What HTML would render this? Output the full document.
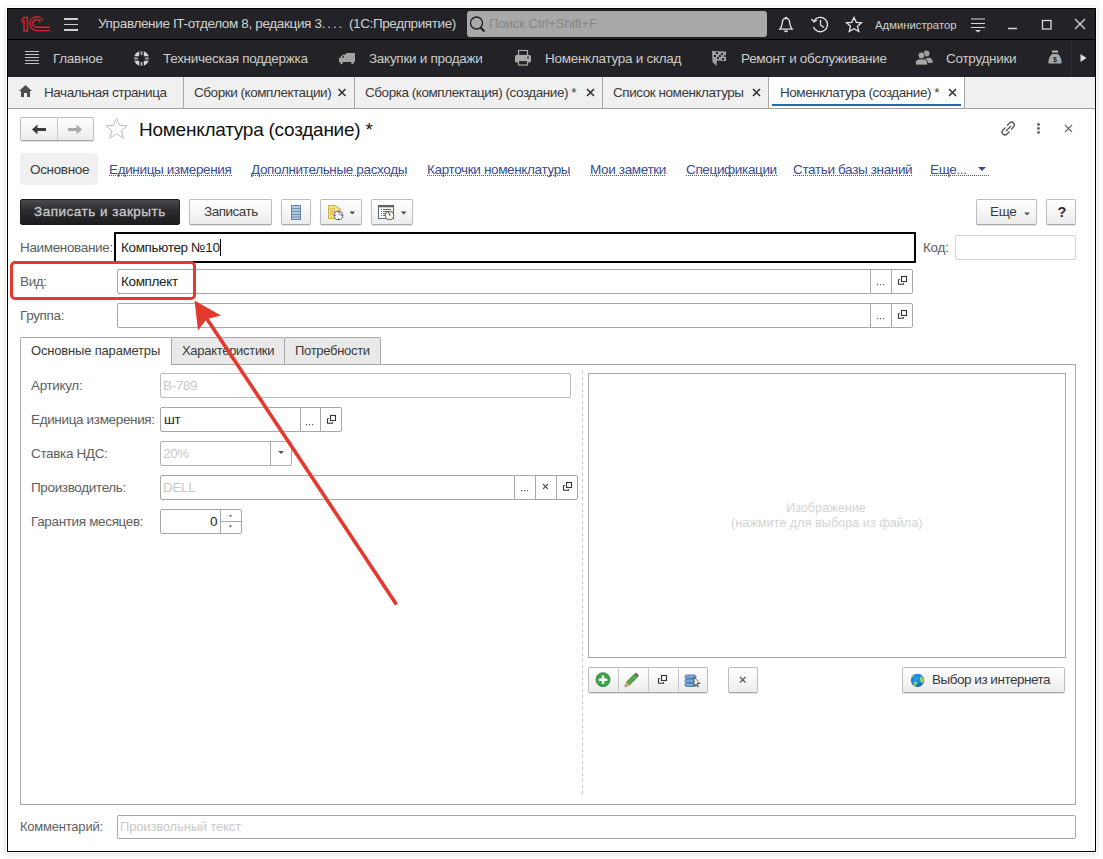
<!DOCTYPE html>
<html><head><meta charset="utf-8">
<style>
*{box-sizing:border-box;margin:0;padding:0}
html,body{width:1103px;height:859px;overflow:hidden;background:#fff;font-family:"Liberation Sans",sans-serif}
.a{position:absolute}
.t{position:absolute;white-space:nowrap;line-height:16px}
#win{position:absolute;left:7px;top:8px;width:1089px;height:844px;border:1px solid #000;background:#fff;box-shadow:0 0 0 1px #fff,0 1px 5px 2px rgba(0,0,0,.10)}
.dk{background:#232327}
.tb{font-size:13.5px;letter-spacing:-0.35px;color:#d2d2d2}
.sb{font-size:13.5px;letter-spacing:-0.28px;color:#cbcbcb}
.tab{font-size:13.5px;letter-spacing:-0.45px;color:#3a3a3a}
.lbl{font-size:13.5px;letter-spacing:-0.35px;color:#606060}
.val{font-size:13.5px;letter-spacing:-0.35px;color:#3a3a3a}
.ph{font-size:13.5px;letter-spacing:-0.35px;color:#c8c8c8}
.lnk{font-size:13.5px;letter-spacing:-0.35px;color:#3b4b8f;background:linear-gradient(to right,#4a5590 50%,transparent 50%) 0 13px/2px 1px repeat-x}
.btn{position:absolute;border:1px solid #bdbdbd;border-bottom-color:#a6a6a6;border-radius:2px;background:linear-gradient(#ffffff,#ececec);box-shadow:0 1px 1px rgba(0,0,0,.12)}
.inp{position:absolute;border:1px solid #a8a8a8;border-radius:2px;background:#fff}
.sep{position:absolute;top:0;bottom:0;width:1px;background:#a8a8a8}
svg{position:absolute;overflow:visible}
</style></head><body>
<div id="win"></div>

<!-- title bar -->
<div class="a dk" style="left:8px;top:9px;width:1087px;height:30px"></div>
<div class="a" style="left:8px;top:39px;width:1087px;height:1px;background:#000"></div>
<!-- section bar -->
<div class="a dk" style="left:8px;top:40px;width:1087px;height:37px"></div>

<!-- 1C logo -->
<svg style="left:0;top:0" width="60" height="40" viewBox="0 0 60 40">
 <g fill="none" stroke="#e0202e" stroke-width="1.4">
  <path d="M21.5 20.5 L24 17.5 L27.5 17.5 L27.5 31 L24 31 L24 21 L22 22.5"/>
  <path d="M43 20.5 A6.9 6.9 0 1 0 37 30.6 L50 30.6"/>
  <path d="M40.3 22.3 A3.8 3.8 0 1 0 37 27.2 L50 27.2"/>
 </g>
</svg>
<!-- hamburger -->
<div class="a" style="left:64px;top:18px;width:14px;height:1.5px;background:#d0d0d0"></div>
<div class="a" style="left:64px;top:23.5px;width:14px;height:1.5px;background:#d0d0d0"></div>
<div class="a" style="left:64px;top:29px;width:14px;height:1.5px;background:#d0d0d0"></div>
<div class="t tb" style="left:98px;top:15.5px">Управление IT-отделом 8, редакция 3<span style="letter-spacing:1.9px">....</span></div>
<div class="t tb" style="left:349px;top:15.5px;letter-spacing:-0.39px">(1С:Предприятие)</div>
<!-- search -->
<div class="a" style="left:467px;top:11px;width:300px;height:26px;background:#a9a9a9;border-radius:3px"></div>
<svg style="left:0;top:0" width="500" height="40">
 <circle cx="476.5" cy="23" r="6" fill="none" stroke="#1e1e1e" stroke-width="1.3"/>
 <path d="M480.5 27.5 L484.5 31.5" stroke="#1e1e1e" stroke-width="2.2"/>
</svg>
<div class="t" style="left:489px;top:16px;font-size:13.3px;letter-spacing:-0.2px;color:#868686">Поиск Ctrl+Shift+F</div>
<!-- bell history star -->
<svg style="left:0;top:0" width="1103" height="40">
 <g fill="none" stroke="#e6e6e6" stroke-width="1.3">
  <path d="M786 18.2 Q782.3 18.6 782.2 23.5 Q781.8 26.8 779.8 29.2 L792.2 29.2 Q790.2 26.8 789.8 23.5 Q789.7 18.6 786 18.2 Z"/>
  <path d="M784.3 31.3 L787.7 31.3" stroke-width="1.6"/>
  <circle cx="786" cy="18" r="0.6"/>
  <path d="M814 21 A7.2 7.2 0 1 1 813.5 27"/>
  <path d="M811.5 19 L814 22 L817 20"/>
  <path d="M820.5 20 L820.5 25 L824 27.5"/>
  <path d="M854 17.5 L856.3 22.3 L861.5 22.8 L857.5 26.3 L858.8 31.5 L854 28.7 L849.2 31.5 L850.5 26.3 L846.5 22.8 L851.7 22.3 Z"/>
 </g>
 <g stroke="#d8d8d8" stroke-width="1.5" fill="none">
  <path d="M971 19 L985 19 M971 23.5 L985 23.5 M971 27.5 L985 27.5" stroke-width="1.1"/>
  <path d="M1008 28.5 L1017 28.5"/>
  <rect x="1042.5" y="20.5" width="8.5" height="8.5" stroke-width="1.3"/>
  <path d="M1075 19 L1085 29 M1085 19 L1075 29" stroke-width="1.3"/>
 </g>
 <path d="M975 30 L981 30 L978 32.5 Z" fill="#d0d0d0"/>
</svg>
<div class="t" style="left:875px;top:16.5px;font-size:11.3px;color:#d0d0d0">Администратор</div>

<!-- section bar content -->
<svg style="left:0;top:0" width="1103" height="80">
 <g stroke="#c4c4c4" stroke-width="1.1">
  <path d="M25 51.5 L39 51.5 M25 54.5 L39 54.5 M25 57.5 L39 57.5 M25 60.5 L39 60.5 M25 63.5 L39 63.5"/>
 </g>
 <!-- lifebuoy -->
 <circle cx="141.5" cy="58.5" r="7.6" fill="#d6d6d6"/>
 <path d="M141.5 50.5 L141.5 66.5 M133.5 58.5 L149.5 58.5" stroke="#232327" stroke-width="4.6"/>
 <path d="M141.5 51.2 L141.5 55 M141.5 62 L141.5 65.8 M134.2 58.5 L138 58.5 M145 58.5 L148.8 58.5" stroke="#a4a4a4" stroke-width="2"/>
 <circle cx="141.5" cy="58.5" r="3" fill="#232327"/>
 <!-- truck -->
 <path d="M346 53 L355 53 L355 62 L339 62 L339 58.5 L343 54.5 L346 54.5 Z" fill="#a3a3a3"/>
 <path d="M341.5 57.5 L344 55.5 L344 57.5 Z" fill="#232327"/>
 <circle cx="341.5" cy="63" r="1.3" fill="#a3a3a3"/><circle cx="352.5" cy="63" r="1.3" fill="#a3a3a3"/>
 <!-- printer -->
 <rect x="518.5" y="50.5" width="9" height="5" fill="none" stroke="#a8a8a8" stroke-width="1.2"/>
 <rect x="515" y="55" width="16" height="7.5" rx="1.5" fill="#a8a8a8"/>
 <rect x="518.5" y="60.5" width="9" height="4.5" fill="#232327" stroke="#a8a8a8" stroke-width="1.2"/>
 <circle cx="528" cy="57.5" r="0.9" fill="#232327"/>
 <!-- flag -->
 <path d="M712 51 L726 51.5 L726 61 L717 60.5 L716.5 66 L712.5 62 Z" fill="#9f9f9f"/>
 <g fill="#232327"><rect x="716" y="52" width="2" height="2"/><rect x="721" y="53" width="2" height="2"/><rect x="714" y="55" width="2" height="2"/><rect x="719" y="55" width="2" height="2"/><rect x="724" y="55" width="1.5" height="2"/><rect x="717" y="57" width="2" height="2"/><rect x="722" y="58" width="2" height="2"/></g>
 <!-- people -->
 <circle cx="926.5" cy="53.5" r="3" fill="#a0a0a0"/>
 <path d="M924 59 L929.5 57.5 L932.5 60 L932.5 63 L927 63 Z" fill="#a0a0a0"/>
 <circle cx="921.5" cy="55.5" r="3.4" fill="#a8a8a8" stroke="#232327" stroke-width="0.8"/>
 <path d="M915.5 65 L915.5 62 Q916 59.5 919 59 L924 59 Q927 59.5 927.5 62 L927.5 65 Z" fill="#a8a8a8" stroke="#232327" stroke-width="0.8"/>
 <!-- money bag -->
 <rect x="1052" y="50.5" width="6" height="2.2" fill="#b0b0b0"/>
 <path d="M1052 54 L1058 54 Q1062 57.5 1061.5 63.5 L1048.5 63.5 Q1048 57.5 1052 54 Z" fill="#a8a8a8"/>
 <text x="1055" y="62" font-size="7" font-family="Liberation Sans" fill="#232327" text-anchor="middle" font-weight="bold">$</text>
 <!-- separator and arrow -->
 <rect x="1071" y="40" width="1" height="37" fill="#2e2e33"/>
 <path d="M1080.5 54 L1086.5 58 L1080.5 62 Z" fill="#e0e0e0"/>
</svg>
<div class="t sb" style="left:53px;top:50.5px">Главное</div>
<div class="t sb" style="left:163px;top:50.5px">Техническая поддержка</div>
<div class="t sb" style="left:369px;top:50.5px">Закупки и продажи</div>
<div class="t sb" style="left:545px;top:50.5px">Номенклатура и склад</div>
<div class="t sb" style="left:741px;top:50.5px">Ремонт и обслуживание</div>
<div class="t sb" style="left:946px;top:50.5px">Сотрудники</div>

<!-- tab bar -->
<div class="a" style="left:8px;top:77px;width:1087px;height:32px;background:#f0f0f0;border-bottom:1px solid #a0a0a0"></div>
<div class="a" style="left:769px;top:77px;width:195px;height:31px;background:#fff"></div>
<div class="a" style="left:772px;top:104px;width:189px;height:2px;background:#1f6db0"></div>
<div class="a" style="left:183px;top:77px;width:1px;height:31px;background:#a8a8a8"></div>
<div class="a" style="left:354px;top:77px;width:1px;height:31px;background:#a8a8a8"></div>
<div class="a" style="left:602px;top:77px;width:1px;height:31px;background:#a8a8a8"></div>
<div class="a" style="left:768px;top:77px;width:1px;height:31px;background:#a8a8a8"></div>
<div class="a" style="left:964px;top:77px;width:1px;height:31px;background:#a8a8a8"></div>
<svg style="left:0;top:0" width="1103" height="110">
 <path d="M25.5 85 L19 91 L21 91 L21 97 L24 97 L24 93 L27 93 L27 97 L30 97 L30 91 L32 91 Z" fill="#4d4d4d"/>
 <g stroke="#333" stroke-width="1.6">
  <path d="M338.5 89 L345.5 96 M345.5 89 L338.5 96"/>
  <path d="M587 89 L594 96 M594 89 L587 96"/>
  <path d="M753 89 L760 96 M760 89 L753 96"/>
  <path d="M949 89 L956 96 M956 89 L949 96"/>
 </g>
</svg>
<div class="t tab" style="left:44px;top:84.5px">Начальная страница</div>
<div class="t tab" style="left:194px;top:84.5px">Сборки (комплектации)</div>
<div class="t tab" style="left:365px;top:84.5px">Сборка (комплектация) (создание) *</div>
<div class="t tab" style="left:613px;top:84.5px">Список номенклатуры</div>
<div class="t tab" style="left:780px;top:84.5px">Номенклатура (создание) *</div>

<!-- header -->
<div class="btn" style="left:20px;top:117px;width:74px;height:24px"></div>
<div class="a" style="left:57px;top:118px;width:1px;height:22px;background:#c8c8c8"></div>
<svg style="left:0;top:0" width="1103" height="150">
 <path d="M32 129.5 L37.5 124.5 L37.5 128 L46 128 L46 131 L37.5 131 L37.5 134.5 Z" fill="#3c3c3c"/>
 <path d="M82 129.5 L76.5 124.5 L76.5 128 L68 128 L68 131 L76.5 131 L76.5 134.5 Z" fill="#a9a9a9"/>
 <path d="M116.5 118.5 L119.4 125.3 L127 125.8 L121.2 130.6 L123.2 138.2 L116.5 134 L109.8 138.2 L111.8 130.6 L106 125.8 L113.6 125.3 Z" fill="none" stroke="#bdbdbd" stroke-width="1"/>
 <g fill="none" stroke="#555" stroke-width="1.3">
  <path d="M1007 125.5 L1009.5 123 A2.8 2.8 0 0 1 1013.5 127 L1011 129.5"/>
  <path d="M1009.5 131.5 L1007 134 A2.8 2.8 0 0 1 1003 130 L1005.5 127.5"/>
  <path d="M1006 131 L1011 126"/>
  <path d="M1065 125 L1072 132 M1072 125 L1065 132" stroke="#666" stroke-width="1.1"/>
 </g>
 <circle cx="1038.5" cy="124.5" r="1.4" fill="#666"/>
 <circle cx="1038.5" cy="128.5" r="1.4" fill="#666"/>
 <circle cx="1038.5" cy="132.5" r="1.4" fill="#666"/>
</svg>
<div class="t" style="left:139px;top:120px;font-size:19px;letter-spacing:-0.25px;line-height:20px;color:#111">Номенклатура (создание) *</div>

<!-- links bar -->
<div class="a" style="left:20px;top:153px;width:78px;height:32px;background:#f0f0f0;border-radius:3px"></div>
<div class="t val" style="left:30px;top:162px">Основное</div>
<div class="t lnk" style="left:109px;top:162px">Единицы измерения</div>
<div class="t lnk" style="left:251px;top:162px">Дополнительные расходы</div>
<div class="t lnk" style="left:427px;top:162px">Карточки номенклатуры</div>
<div class="t lnk" style="left:590px;top:162px">Мои заметки</div>
<div class="t lnk" style="left:686px;top:162px">Спецификации</div>
<div class="t lnk" style="left:793px;top:162px">Статьи базы знаний</div>
<div class="t lnk" style="left:930px;top:162px;width:59px">Еще...</div>
<svg style="left:0;top:0" width="1103" height="200"><path d="M978 167 L986 167 L982 171 Z" fill="#3b4b8f"/></svg>

<!-- command bar -->
<div class="a" style="left:20px;top:199px;width:160px;height:26px;border-radius:2px;background:linear-gradient(#4a4a4e,#2c2c2f 45%,#1d1d20);border:1px solid #1a1a1a"></div>
<div class="t" style="left:34px;top:204px;font-size:13.5px;color:#c6c6c6;letter-spacing:0.5px;-webkit-text-stroke:0.35px #c6c6c6">Записать и закрыть</div>
<div class="btn" style="left:189px;top:199px;width:83px;height:26px"></div>
<div class="t val" style="left:204px;top:204px;letter-spacing:-0.5px">Записать</div>
<div class="btn" style="left:281px;top:199px;width:30px;height:26px"></div>
<div class="btn" style="left:320px;top:199px;width:42px;height:26px"></div>
<div class="btn" style="left:371px;top:199px;width:42px;height:26px"></div>
<div class="btn" style="left:976px;top:199px;width:61px;height:26px"></div>
<div class="t val" style="left:990px;top:204px">Еще</div>
<div class="btn" style="left:1046px;top:199px;width:30px;height:26px"></div>
<div class="t" style="left:1057.5px;top:204px;font-size:14.5px;font-weight:bold;color:#2a2a2a">?</div>
<svg style="left:0;top:0" width="1103" height="240">
 <!-- list icon -->
 <rect x="291.5" y="205.5" width="9" height="14" fill="#b4cade" stroke="#6486a6"/>
 <path d="M292 208.5 H300 M292 211.5 H300 M292 214.5 H300 M292 217 H300" stroke="#5a7fa8" stroke-width="0.8"/>
 <!-- doc gear -->
 <path d="M328.5 205.5 H335 L340.5 209.5 V218.5 H328.5 Z" fill="#f3df86" stroke="#c9ad4a"/>
 <path d="M330 209 H335 M330 211.5 H336 M330 214 H334" stroke="#caa440" stroke-width="0.8"/>
 <circle cx="338.5" cy="215.5" r="4.3" fill="#fff" stroke="#70708f" stroke-width="1.1"/>
 <path d="M338.5 215.5 V211.5 A4 4 0 0 1 342.5 215.5 Z" fill="#b9b9d6"/>
 <g fill="#2a2a4a"><rect x="338" y="211.3" width="1.1" height="1.1"/><rect x="338" y="218.8" width="1.1" height="1.1"/><rect x="334.4" y="215" width="1.1" height="1.1"/><rect x="341.6" y="215" width="1.1" height="1.1"/></g>
 <path d="M349.5 211.5 H355 L352.25 214.5 Z" fill="#444"/>
 <!-- calendar-clock -->
 <rect x="378.5" y="205.5" width="15" height="13" fill="#fff" stroke="#5d6670"/>
 <rect x="378.5" y="205.5" width="15" height="1.8" fill="#5d6670"/>
 <g fill="#4f6fae"><rect x="381" y="209" width="1" height="1"/><rect x="381" y="211" width="1" height="1"/><rect x="381" y="213" width="1" height="1"/><rect x="381" y="215" width="1" height="1"/>
 <rect x="383" y="209" width="8" height="1"/><rect x="383" y="211" width="5" height="1"/><rect x="383" y="213" width="4" height="1"/><rect x="383" y="215" width="3" height="1"/></g>
 <circle cx="389.5" cy="215.5" r="4.2" fill="#fff" stroke="#5f8466" stroke-width="1.2"/>
 <path d="M388.3 212.3 L390.3 215.6" stroke="#3f5a45" stroke-width="1.1"/>
 <path d="M401 211.5 H406.5 L403.75 214.5 Z" fill="#444"/>
 <path d="M1024 212.5 H1030 L1027 215.5 Z" fill="#555"/>
</svg>

<!-- Наименование row -->
<div class="t lbl" style="left:20px;top:240px">Наименование:</div>
<div class="a" style="left:114px;top:232px;width:802px;height:31px;border:2px solid #000;background:#fff"></div>
<div class="t val" style="left:121px;top:240px;color:#222">Компьютер №10</div>
<div class="a" style="left:220px;top:239px;width:1px;height:17px;background:#000"></div>
<div class="t lbl" style="left:923px;top:240px">Код:</div>
<div class="inp" style="left:955px;top:235px;width:121px;height:25px;border-color:#d6d6d6"></div>

<!-- Вид / Группа -->
<div class="t lbl" style="left:20px;top:274px">Вид:</div>
<div class="inp" style="left:117px;top:269px;width:796px;height:25px"><div class="sep" style="left:752px"></div><div class="sep" style="left:773px"></div></div>
<div class="t val" style="left:121px;top:274px;color:#222">Комплект</div>
<div class="t lbl" style="left:20px;top:308px">Группа:</div>
<div class="inp" style="left:117px;top:303px;width:796px;height:25px"><div class="sep" style="left:752px"></div><div class="sep" style="left:773px"></div></div>
<svg style="left:0;top:0" width="1103" height="340">
 <g fill="#666"><rect x="877" y="284" width="1.2" height="1.2"/><rect x="880" y="284" width="1.2" height="1.2"/><rect x="883" y="284" width="1.2" height="1.2"/>
 <rect x="877" y="318" width="1.2" height="1.2"/><rect x="880" y="318" width="1.2" height="1.2"/><rect x="883" y="318" width="1.2" height="1.2"/></g>
 <g fill="none" stroke="#333" stroke-width="1.1">
  <g transform="translate(898,276)" fill="none" stroke="#333" stroke-width="1.1"><path d="M0.5 3.5 V8.3 H5.4 V7 M0.5 3.5 H1.8"/><rect x="3.5" y="0.5" width="5" height="5"/></g><g transform="translate(898,310)" fill="none" stroke="#333" stroke-width="1.1"><path d="M0.5 3.5 V8.3 H5.4 V7 M0.5 3.5 H1.8"/><rect x="3.5" y="0.5" width="5" height="5"/></g>
 </g>
</svg>

<!-- tabs -->
<div class="a" style="left:20px;top:364px;width:1056px;height:441px;border:1px solid #a8a8a8;background:#fff"></div>
<div class="a" style="left:20px;top:337px;width:152px;height:28px;border:1px solid #a8a8a8;border-bottom:none;border-radius:2px 2px 0 0;background:#fff"></div>
<div class="a" style="left:171px;top:337px;width:114px;height:28px;border:1px solid #a8a8a8;border-radius:2px 2px 0 0;background:#e9e9e9"></div>
<div class="a" style="left:284px;top:337px;width:97px;height:28px;border:1px solid #a8a8a8;border-radius:2px 2px 0 0;background:#e9e9e9"></div>
<div class="a" style="left:21px;top:364px;width:150px;height:1px;background:#fff"></div>
<div class="t val" style="left:31px;top:342.5px;font-size:13px;letter-spacing:-0.18px">Основные параметры</div>
<div class="t val" style="left:182px;top:342.5px;font-size:13px;letter-spacing:-0.3px">Характеристики</div>
<div class="t val" style="left:295px;top:342.5px;font-size:13px;letter-spacing:-0.3px">Потребности</div>

<!-- left fields -->
<div class="t lbl" style="left:31px;top:378px">Артикул:</div>
<div class="inp" style="left:160px;top:373px;width:411px;height:25px;border-color:#bcbcbc"></div>
<div class="t ph" style="left:163px;top:378px">B-789</div>

<div class="t lbl" style="left:31px;top:412px">Единица измерения:</div>
<div class="inp" style="left:160px;top:407px;width:182px;height:25px"><div class="sep" style="left:139px"></div><div class="sep" style="left:159px"></div></div>
<div class="t val" style="left:164px;top:412px;color:#222">шт</div>

<div class="t lbl" style="left:31px;top:446px">Ставка НДС:</div>
<div class="inp" style="left:160px;top:441px;width:132px;height:25px;border-color:#b0b0b0"><div class="sep" style="left:109px"></div></div>
<div class="t ph" style="left:163px;top:446px">20%</div>

<div class="t lbl" style="left:31px;top:480px">Производитель:</div>
<div class="inp" style="left:160px;top:475px;width:418px;height:25px"><div class="sep" style="left:353px"></div><div class="sep" style="left:374px"></div><div class="sep" style="left:395px"></div></div>
<div class="t ph" style="left:163px;top:480px">DELL</div>

<div class="t lbl" style="left:31px;top:514px">Гарантия месяцев:</div>
<div class="inp" style="left:160px;top:509px;width:82px;height:25px"><div class="sep" style="left:59px"></div></div>
<div class="a" style="left:221px;top:521px;width:20px;height:1px;background:#a8a8a8"></div>
<div class="t val" style="left:210px;top:513.5px;color:#222">0</div>

<svg style="left:0;top:0" width="1103" height="859">
 <g fill="#555">
  <rect x="306" y="424" width="1.2" height="1.2"/><rect x="309" y="424" width="1.2" height="1.2"/><rect x="312" y="424" width="1.2" height="1.2"/>
  <rect x="521" y="490" width="1.2" height="1.2"/><rect x="524" y="490" width="1.2" height="1.2"/><rect x="527" y="490" width="1.2" height="1.2"/>
  <path d="M278 451 H284 L281 454 Z"/>
  <path d="M228.8 516.6 H232.2 L230.5 514.6 Z"/>
  <path d="M228.8 525.4 H232.2 L230.5 527.4 Z"/>
 </g>
 <g fill="none" stroke="#333" stroke-width="1.1">
  <g transform="translate(327,415)" fill="none" stroke="#333" stroke-width="1.1"><path d="M0.5 3.5 V8.3 H5.4 V7 M0.5 3.5 H1.8"/><rect x="3.5" y="0.5" width="5" height="5"/></g>
  <g transform="translate(563,482)" fill="none" stroke="#333" stroke-width="1.1"><path d="M0.5 3.5 V8.3 H5.4 V7 M0.5 3.5 H1.8"/><rect x="3.5" y="0.5" width="5" height="5"/></g>
  <path d="M543 484 L548 489 M548 484 L543 489" stroke="#555"/>
 </g>
 <!-- dashed separator -->
 <path d="M582.5 371 V796" stroke="#c6c6c6" stroke-dasharray="3 3"/>
</svg>

<!-- image box -->
<div class="a" style="left:588px;top:373px;width:478px;height:285px;border:1px solid #a8a8a8"></div>
<div class="t" style="left:786px;top:500px;font-size:12.7px;color:#d4d4d4">Изображение</div>
<div class="t" style="left:731px;top:515px;font-size:12.7px;color:#d4d4d4">(нажмите для выбора из файла)</div>
<div class="btn" style="left:588px;top:667px;width:120px;height:26px"></div>
<div class="a" style="left:618px;top:668px;width:1px;height:24px;background:#c8c8c8"></div>
<div class="a" style="left:648px;top:668px;width:1px;height:24px;background:#c8c8c8"></div>
<div class="a" style="left:678px;top:668px;width:1px;height:24px;background:#c8c8c8"></div>
<div class="btn" style="left:728px;top:667px;width:30px;height:26px"></div>
<div class="btn" style="left:902px;top:667px;width:163px;height:26px"></div>
<div class="t val" style="left:932px;top:672px;letter-spacing:-0.48px">Выбор из интернета</div>
<svg style="left:0;top:0" width="1103" height="859">
 <circle cx="603" cy="679.7" r="7" fill="#3aa54a" stroke="#2b7f38" stroke-width="0.8"/>
 <path d="M603 675.5 V684 M598.8 679.7 H607.2" stroke="#fff" stroke-width="2.4"/>
 <path d="M625 687 L626.5 682 L634.5 674 L637.5 677 L629.5 685 Z" fill="#55a84a" stroke="#2f6f2a" stroke-width="0.7"/>
 <path d="M634.5 674 L636 672.5 L639 675.5 L637.5 677 Z" fill="#7a5a4a"/>
 <path d="M625 687 L626.5 682 L629.5 685 Z" fill="#e8b070"/>
 <g fill="none" stroke="#333" stroke-width="1.1">
  <g transform="translate(658,675)" fill="none" stroke="#333" stroke-width="1.1"><path d="M0.5 3.5 V8.3 H5.4 V7 M0.5 3.5 H1.8"/><rect x="3.5" y="0.5" width="5" height="5"/></g>
  <path d="M740 677 L745.5 682.5 M745.5 677 L740 682.5" stroke="#555"/>
 </g>
 <g>
  <rect x="685" y="675" width="11" height="3.5" rx="1.5" fill="#7aa6d8" stroke="#3e6ea6" stroke-width="0.8"/>
  <rect x="685" y="679" width="11" height="3.5" rx="1.5" fill="#7aa6d8" stroke="#3e6ea6" stroke-width="0.8"/>
  <rect x="685" y="683" width="11" height="3.5" rx="1.5" fill="#7aa6d8" stroke="#3e6ea6" stroke-width="0.8"/>
  <path d="M694 677 L694 686 L696 684 L697.5 687 L698.5 686.5 L697 683.5 L700 683.5 Z" fill="#fff" stroke="#333" stroke-width="0.8"/>
 </g>
 <!-- globe -->
 <defs><radialGradient id="gl" cx="0.45" cy="0.35" r="0.7"><stop offset="0" stop-color="#1aa8f0"/><stop offset="0.6" stop-color="#1c78dc"/><stop offset="1" stop-color="#1f4fa0"/></radialGradient></defs>
 <circle cx="917.5" cy="680.3" r="6.6" fill="url(#gl)"/>
 <path d="M920.5 676.5 Q923.5 677 923.8 680.5 Q923.5 683 921.5 683.2 Q920 681 919.8 678.5 Z" fill="#8fdc5c"/>
 <path d="M913.5 681.5 Q915.5 681 917.5 682.5 L916.5 685 Q915.5 686.5 914.5 686 Q913 684 913.5 681.5 Z" fill="#84d45a"/>
 <circle cx="912.5" cy="676.3" r="1" fill="#9ad860"/>
</svg>

<!-- comment -->
<div class="t lbl" style="left:20px;top:819px;font-size:13px;letter-spacing:-0.22px">Комментарий:</div>
<div class="inp" style="left:117px;top:815px;width:959px;height:24px"></div>
<div class="t ph" style="left:120px;top:819px;font-size:13px;letter-spacing:-0.16px">Произвольный текст</div>

<!-- red annotation -->
<div class="a" style="left:10px;top:261px;width:186px;height:39px;border:3px solid #e5392e;border-radius:5px"></div>
<svg style="left:0;top:0" width="1103" height="859">
 <path d="M207 319 L395.6 603.3" stroke="#e5392e" stroke-width="3.6" stroke-linecap="round"/>
 <path d="M194.5 300.5 L221 315.5 L209 318.5 L205.5 320.5 L198 330.5 Z" fill="#e5392e"/>
</svg>

</body></html>
